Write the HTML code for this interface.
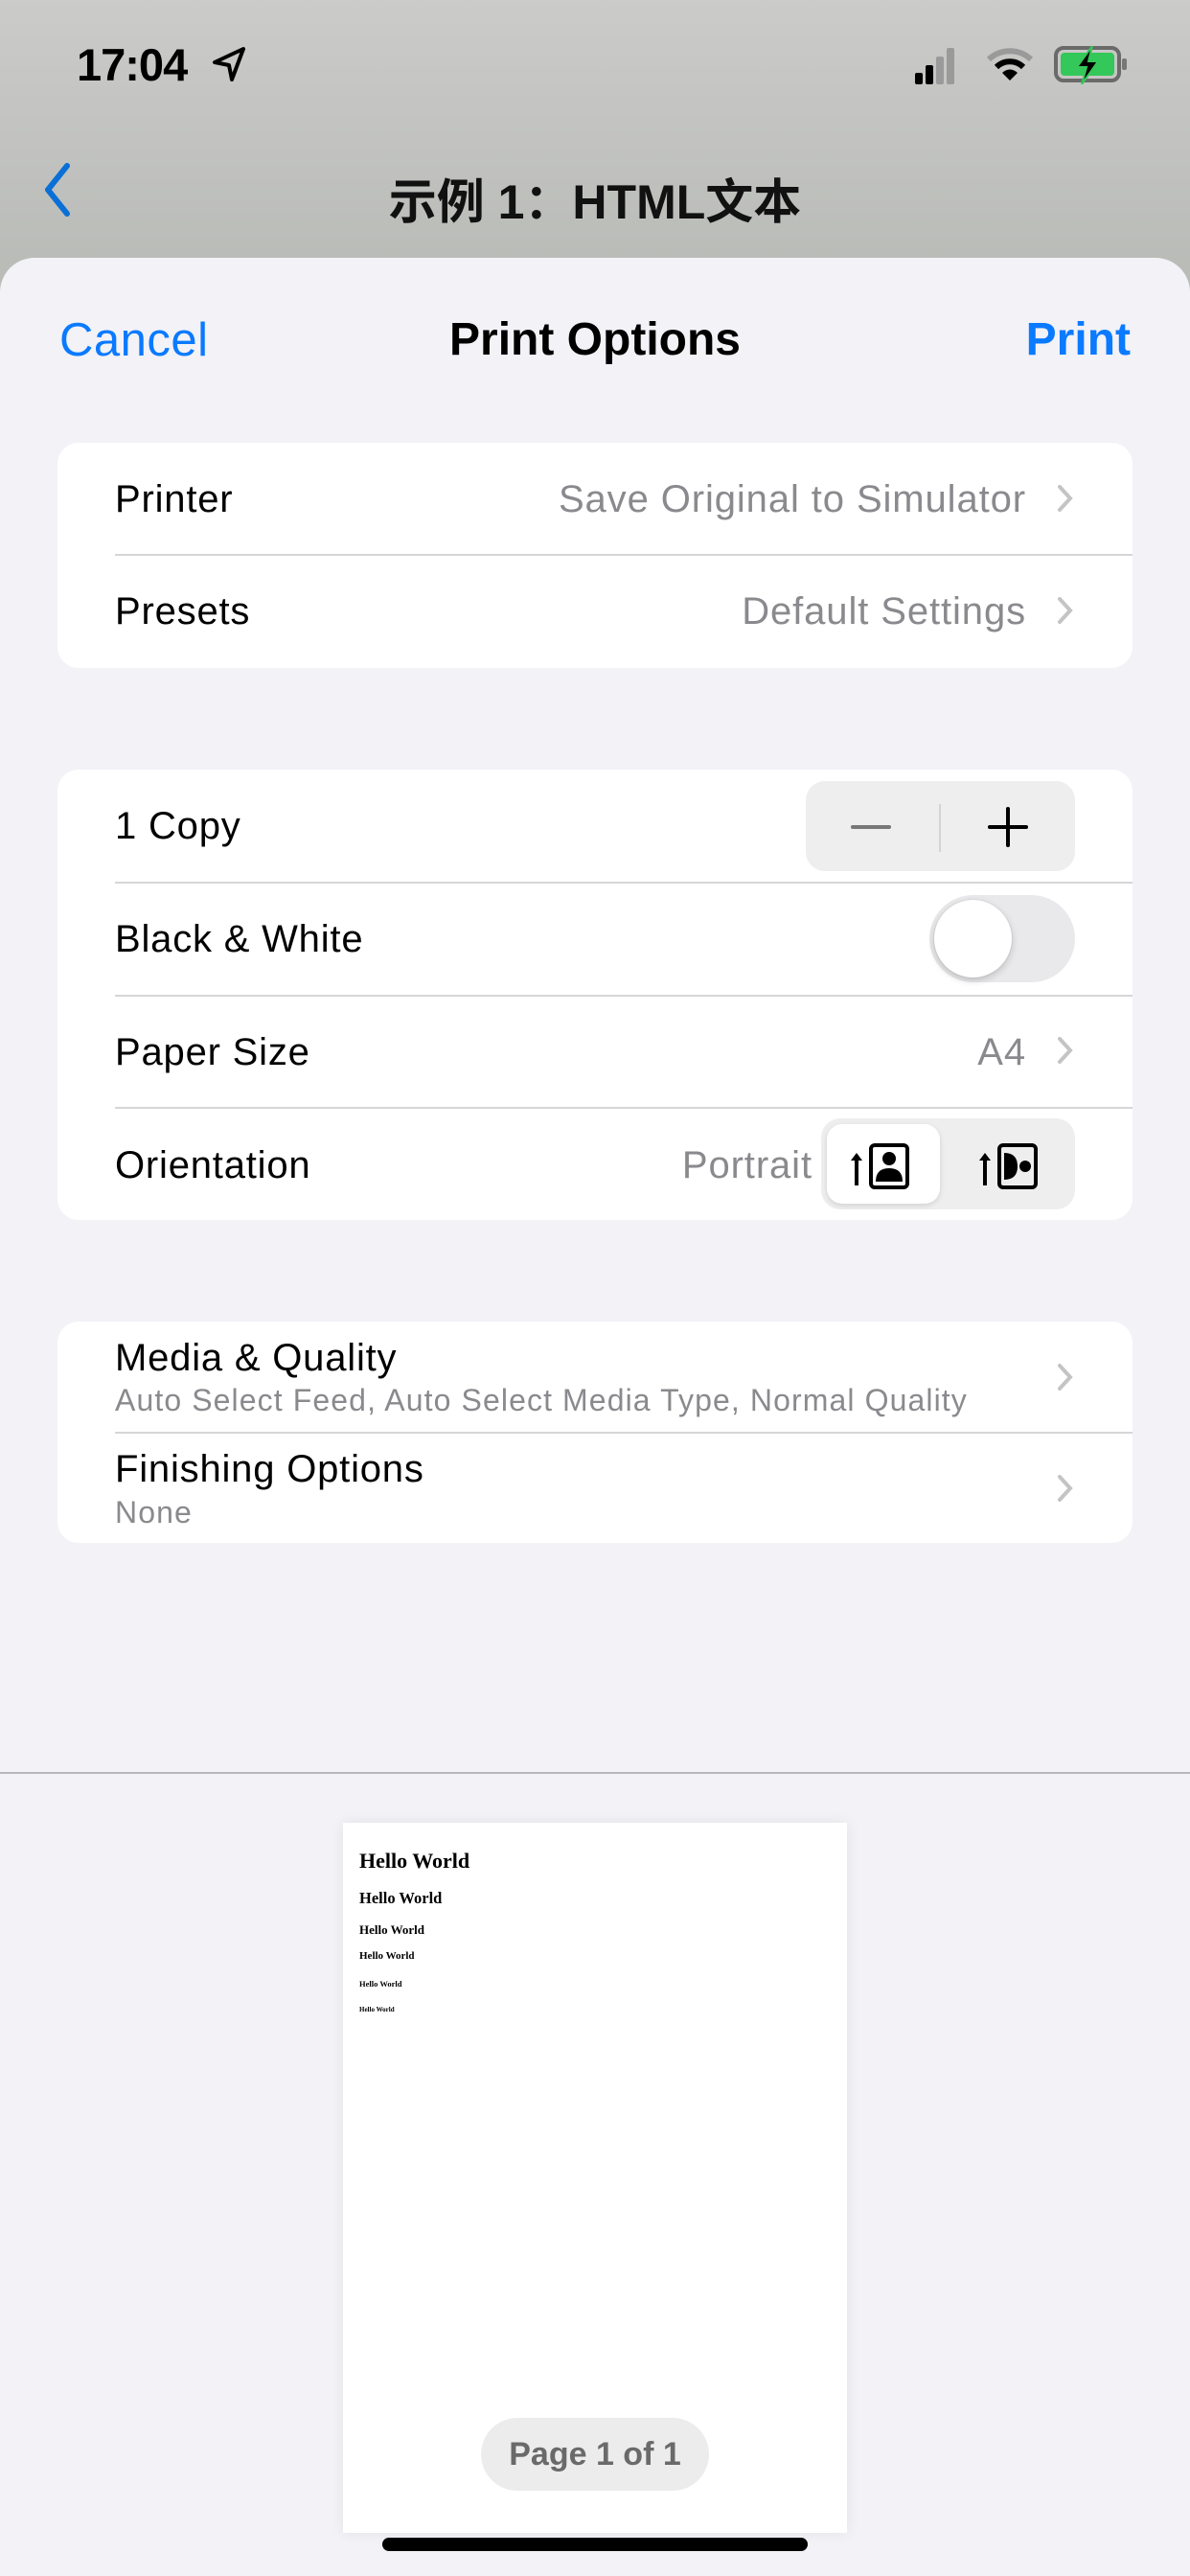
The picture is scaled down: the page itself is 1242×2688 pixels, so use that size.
<!DOCTYPE html>
<html><head><meta charset="utf-8"><style>
*{margin:0;padding:0;box-sizing:border-box}
body{width:1242px;height:2688px;position:relative;overflow:hidden;font-family:"Liberation Sans","Noto Sans CJK SC",sans-serif;background:linear-gradient(#cbcbca,#babcb8 270px)}
.a{position:absolute;white-space:nowrap}
.sheet{position:absolute;left:0;top:269px;width:1242px;height:2419px;background:#f2f2f7;border-radius:36px 36px 0 0}
.grp{position:absolute;left:60px;width:1122px;background:#fff;border-radius:22px}
.sep{position:absolute;left:60px;right:0;height:2px;background:#d6d6d9}
.lbl{position:absolute;left:60px;font-size:40px;letter-spacing:0.8px;color:#000}
.val{position:absolute;right:111px;font-size:40px;letter-spacing:0.9px;color:#8a8a8e}
.chev{position:absolute;right:62px;width:16px;height:28px}
.sub{position:absolute;left:60px;font-size:32px;letter-spacing:1.1px;color:#8a8a8e}
.hw{position:absolute;left:375px;font-family:"Liberation Serif",serif;font-weight:bold;color:#000;line-height:1}
</style></head><body>
<div class="a" style="left:80px;top:40px;font-size:47px;font-weight:bold;letter-spacing:-1px">17:04</div>
<svg class="a" style="left:220px;top:47px" width="40" height="40" viewBox="0 0 40 40"><path d="M34 4 L4 18 L19 21 L22 36 Z" fill="none" stroke="#000" stroke-width="4" stroke-linejoin="round"/></svg>
<svg class="a" style="left:955px;top:48px" width="60" height="40"><rect x="0" y="28" width="8" height="12" rx="2"/><rect x="11" y="20" width="8" height="20" rx="2"/><rect x="22" y="11" width="8" height="29" rx="2" fill="#9a9a9a"/><rect x="33" y="2" width="8" height="38" rx="2" fill="#9a9a9a"/></svg>
<svg class="a" style="left:1030px;top:50px" width="48" height="36" viewBox="0 0 48 36"><path d="M2 12 A32 32 0 0 1 46 12" fill="none" stroke="#9a9a9a" stroke-width="6"/><path d="M10 20 A20 20 0 0 1 38 20" fill="none" stroke="#000" stroke-width="6"/><path d="M24 34 L16 26 A11 11 0 0 1 32 26 Z"/></svg>
<svg class="a" style="left:1100px;top:48px" width="80" height="40"><rect x="2" y="2" width="66" height="34" rx="8" fill="none" stroke="#6a6a6a" stroke-width="4"/><rect x="7" y="7" width="56" height="24" rx="4" fill="#34c759"/><rect x="71" y="13" width="5" height="12" rx="2" fill="#777"/><path d="M40 0 L24 22 L34 22 L29 40 L46 16 L36 16 Z" fill="#000" stroke="#34c759" stroke-width="2"/></svg>
<svg class="a" style="left:38px;top:168px" width="40" height="60"><path d="M32 5 L12 30 L32 55" fill="none" stroke="#0a6fd6" stroke-width="6" stroke-linecap="round" stroke-linejoin="round"/></svg>
<div class="a" style="left:0;width:1242px;text-align:center;top:171px;font-size:50px;font-weight:bold;color:#111">示例 1：HTML文本</div>
<div class="sheet">
<div class="a" style="left:62px;top:58px;font-size:49px;letter-spacing:0.5px;color:#0a7aff">Cancel</div>
<div class="a" style="left:0;width:1242px;text-align:center;top:58px;font-size:48px;font-weight:bold">Print Options</div>
<div class="a" style="right:62px;top:58px;font-size:48px;font-weight:bold;color:#0a7aff">Print</div>
</div>
<div class="grp" style="top:462px;height:235px">
 <div class="lbl" style="top:37px">Printer</div><div class="val" style="top:37px">Save Original to Simulator</div>
 <svg class="chev" style="top:44px"><path d="M2 2 L13 14 L2 26" fill="none" stroke="#c4c4c7" stroke-width="4" stroke-linecap="round"/></svg>
 <div class="sep" style="top:116px"></div>
 <div class="lbl" style="top:154px">Presets</div><div class="val" style="top:154px">Default Settings</div>
 <svg class="chev" style="top:161px"><path d="M2 2 L13 14 L2 26" fill="none" stroke="#c4c4c7" stroke-width="4" stroke-linecap="round"/></svg>
</div>
<div class="grp" style="top:803px;height:470px">
 <div class="lbl" style="top:37px">1 Copy</div>
 <div class="a" style="left:781px;top:12px;width:281px;height:94px;background:#eeeeef;border-radius:20px">
  <div class="a" style="left:47px;top:46px;width:42px;height:4px;background:#777;border-radius:2px"></div>
  <div class="a" style="left:139px;top:24px;width:2px;height:50px;background:#d4d4d6"></div>
  <div class="a" style="left:190px;top:46px;width:42px;height:4px;background:#000;border-radius:2px"></div>
  <div class="a" style="left:209px;top:27px;width:4px;height:42px;background:#000;border-radius:2px"></div>
 </div>
 <div class="sep" style="top:117px"></div>
 <div class="lbl" style="top:155px">Black &amp; White</div>
 <div class="a" style="left:910px;top:131px;width:152px;height:91px;background:#e9e9eb;border-radius:46px">
  <div class="a" style="left:5px;top:5px;width:81px;height:81px;background:#fff;border-radius:50%;box-shadow:0 3px 8px rgba(0,0,0,.18),0 0 0 1px rgba(0,0,0,.04)"></div>
 </div>
 <div class="sep" style="top:235px"></div>
 <div class="lbl" style="top:273px">Paper Size</div><div class="val" style="top:273px">A4</div>
 <svg class="chev" style="top:279px"><path d="M2 2 L13 14 L2 26" fill="none" stroke="#c4c4c7" stroke-width="4" stroke-linecap="round"/></svg>
 <div class="sep" style="top:352px"></div>
 <div class="lbl" style="top:391px">Orientation</div><div class="val" style="top:391px;right:334px">Portrait</div>
 <div class="a" style="left:797px;top:364px;width:265px;height:95px;background:#eeeeef;border-radius:20px">
  <div class="a" style="left:6px;top:6px;width:118px;height:83px;background:#fff;border-radius:16px;box-shadow:0 2px 6px rgba(0,0,0,.12)"></div>
  <svg class="a" style="left:30px;top:26px" width="70" height="48"><path d="M7 44 V16" stroke="#000" stroke-width="4"/><path d="M1 18 L7 10 L13 18Z"/><rect x="22" y="2" width="38" height="44" rx="4" fill="none" stroke="#000" stroke-width="4"/><circle cx="41" cy="16" r="7"/><path d="M27 40 Q27 26 41 26 Q55 26 55 40 Z"/></svg>
  <svg class="a" style="left:164px;top:26px" width="70" height="48"><path d="M7 44 V16" stroke="#000" stroke-width="4"/><path d="M1 18 L7 10 L13 18Z"/><rect x="22" y="2" width="38" height="44" rx="4" fill="none" stroke="#000" stroke-width="4"/><circle cx="49" cy="24" r="6"/><path d="M27 10 Q41 10 41 24 Q41 38 27 38 Z"/></svg>
 </div>
</div>
<div class="grp" style="top:1379px;height:231px">
 <div class="lbl" style="top:16px">Media &amp; Quality</div>
 <div class="sub" style="top:64px">Auto Select Feed, Auto Select Media Type, Normal Quality</div>
 <svg class="chev" style="top:44px"><path d="M2 2 L13 14 L2 26" fill="none" stroke="#c4c4c7" stroke-width="4" stroke-linecap="round"/></svg>
 <div class="sep" style="top:115px"></div>
 <div class="lbl" style="top:132px">Finishing Options</div>
 <div class="sub" style="top:181px">None</div>
 <svg class="chev" style="top:160px"><path d="M2 2 L13 14 L2 26" fill="none" stroke="#c4c4c7" stroke-width="4" stroke-linecap="round"/></svg>
</div>
<div class="a" style="left:0;top:1849px;width:1242px;height:2px;background:#b8b8bb"></div>
<div class="a" style="left:358px;top:1902px;width:526px;height:741px;background:#fff;box-shadow:0 0 14px rgba(0,0,0,.07)"></div>
<div class="hw" style="top:1931px;font-size:22px">Hello World</div>
<div class="hw" style="top:1973px;font-size:16.5px">Hello World</div>
<div class="hw" style="top:2007px;font-size:13px">Hello World</div>
<div class="hw" style="top:2036px;font-size:11px">Hello World</div>
<div class="hw" style="top:2066px;font-size:8.5px">Hello World</div>
<div class="hw" style="top:2094px;font-size:7px">Hello World</div>
<div class="a" style="left:502px;top:2523px;width:238px;height:76px;border-radius:38px;background:#ececec;text-align:center;line-height:76px;font-size:34px;font-weight:bold;color:#6a6a6a">Page 1 of 1</div>
<div class="a" style="left:399px;top:2648px;width:444px;height:14px;border-radius:7px;background:#000"></div>
</body></html>
